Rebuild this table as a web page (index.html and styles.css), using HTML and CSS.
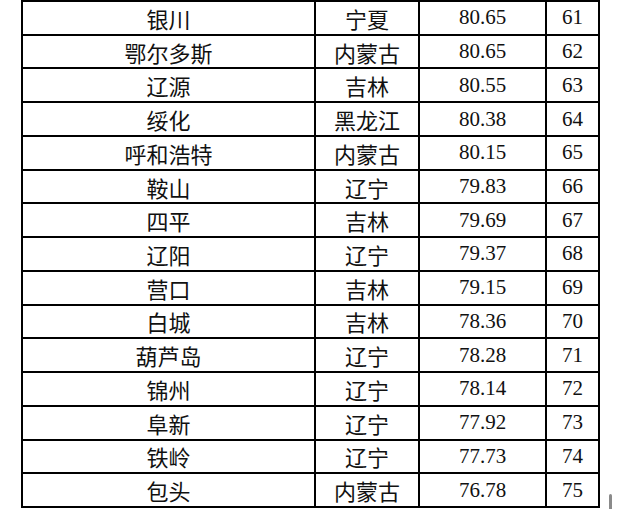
FILE: index.html
```html
<!DOCTYPE html>
<html lang="zh">
<head>
<meta charset="utf-8">
<link rel="stylesheet" href="styles.css">
</head>
<body>
<div class="page">
  <div class="rank-table">
    <div class="c name">银川</div><div class="c prov">宁夏</div><div class="c num">80.65</div><div class="c num">61</div>
    <div class="c name">鄂尔多斯</div><div class="c prov">内蒙古</div><div class="c num">80.65</div><div class="c num">62</div>
    <div class="c name">辽源</div><div class="c prov">吉林</div><div class="c num">80.55</div><div class="c num">63</div>
    <div class="c name">绥化</div><div class="c prov">黑龙江</div><div class="c num">80.38</div><div class="c num">64</div>
    <div class="c name">呼和浩特</div><div class="c prov">内蒙古</div><div class="c num">80.15</div><div class="c num">65</div>
    <div class="c name">鞍山</div><div class="c prov">辽宁</div><div class="c num">79.83</div><div class="c num">66</div>
    <div class="c name">四平</div><div class="c prov">吉林</div><div class="c num">79.69</div><div class="c num">67</div>
    <div class="c name">辽阳</div><div class="c prov">辽宁</div><div class="c num">79.37</div><div class="c num">68</div>
    <div class="c name">营口</div><div class="c prov">吉林</div><div class="c num">79.15</div><div class="c num">69</div>
    <div class="c name">白城</div><div class="c prov">吉林</div><div class="c num">78.36</div><div class="c num">70</div>
    <div class="c name">葫芦岛</div><div class="c prov">辽宁</div><div class="c num">78.28</div><div class="c num">71</div>
    <div class="c name">锦州</div><div class="c prov">辽宁</div><div class="c num">78.14</div><div class="c num">72</div>
    <div class="c name">阜新</div><div class="c prov">辽宁</div><div class="c num">77.92</div><div class="c num">73</div>
    <div class="c name">铁岭</div><div class="c prov">辽宁</div><div class="c num">77.73</div><div class="c num">74</div>
    <div class="c name">包头</div><div class="c prov">内蒙古</div><div class="c num">76.78</div><div class="c num">75</div>
  </div>
  <div class="scroll-thumb"></div>
</div>
</body>
</html>
```
FILE: styles.css
```css
html, body {
  margin: 0;
  padding: 0;
  background: #fff;
}
.page {
  position: relative;
  width: 618px;
  height: 509px;
  overflow: hidden;
  padding-left: 21px;
  box-sizing: border-box;
}
.rank-table {
  display: grid;
  grid-template-columns: 291px 102px 125px 51px;
  grid-template-rows: repeat(15, 1fr);
  gap: 2px;
  padding: 2px;
  width: 579px;
  height: 508px;
  box-sizing: border-box;
  background: #000;
}
.c {
  background: #fff;
  display: flex;
  align-items: center;
  justify-content: center;
  color: #111;
  line-height: 1;
}
.name, .prov {
  font-family: "Noto Sans CJK SC", "Noto Sans", sans-serif;
  font-size: 22px;
}
.num {
  font-family: "Liberation Serif", "Times New Roman", serif;
  font-size: 21px;
}
.scroll-thumb {
  position: absolute;
  left: 609px;
  top: 494px;
  width: 3px;
  height: 20px;
  border-radius: 2px;
  background: #8a8a8a;
}
```
